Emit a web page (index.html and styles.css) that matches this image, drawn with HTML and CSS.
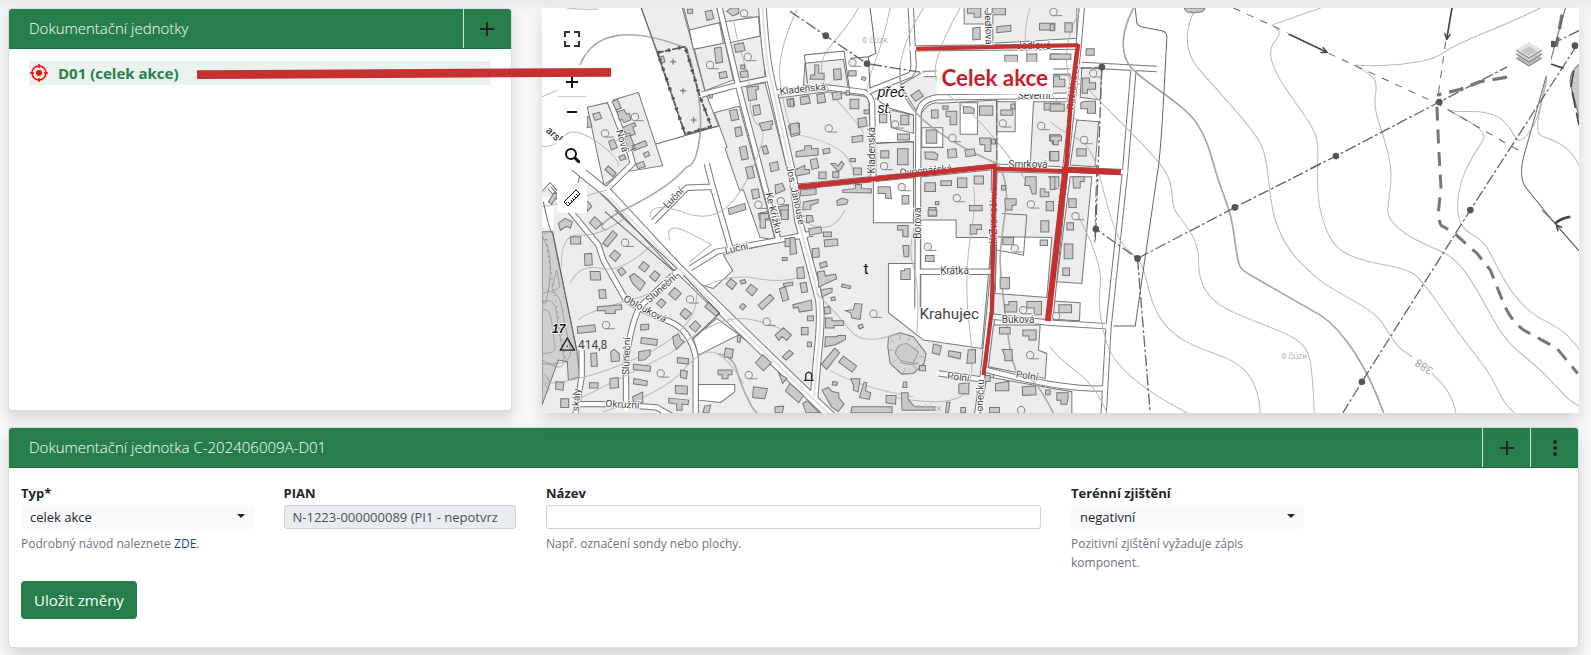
FILE: index.html
```html
<!DOCTYPE html>
<html lang="cs">
<head>
<meta charset="utf-8">
<meta name="viewport" content="width=device-width, initial-scale=1">
<title>Dokumentační jednotky</title>
<link rel="stylesheet" href="styles.css">
</head>
<body>
<main class="page">
  <div class="top">
    <section class="card units">
      <header class="card-header">
        <h2 class="card-title">Dokumentační jednotky</h2>
        <button class="header-btn" type="button" aria-label="Přidat jednotku">
          <svg class="icon-plus" viewBox="0 0 14 14"><path d="M7 0v14M0 7h14"/></svg>
        </button>
      </header>
      <div class="unit-list">
        <a class="unit" href="#d01">
          <svg class="icon-target" viewBox="0 0 18 18"><circle cx="9" cy="9" r="7"/><path d="M9 0v4M9 14v4M0 9h4M14 9h4"/><circle class="dot" cx="9" cy="9" r="3"/></svg>
          <span>D01 (celek akce)</span>
        </a>
      </div>
    </section>

    <section class="map" aria-label="Mapa">
      <svg class="map-art" viewBox="0 0 3111 1215" preserveAspectRatio="xMidYMid slice">
        <defs>
          <symbol id="tree" viewBox="-14 -14 44 28" overflow="visible"><circle r="11" fill="#ededed"/><path d="M2 11h24" fill="none"/></symbol>
          <marker id="arrow" viewBox="0 0 20 20" refX="18" refY="10" markerWidth="22" markerHeight="22" markerUnits="userSpaceOnUse" orient="auto"><path d="M2 2l16 8-16 8" fill="none" stroke="#444" stroke-width="4"/></marker>
          <g id="roads">
            <path class="road trunk" d="M110 480L240 585 440 800 800 1150 905 1250"/>
            <path class="road" d="M60 560L135 650 205 735 220 780 285 895Q310 920 420 965 480 990 497 1070V1250"/>
            <path class="road" d="M450 805L330 920Q305 960 288 1080V1225"/>
            <path class="road" d="M140 1212L240 1212 380 1222 430 1250M155 1050V1130L135 1250"/>
            <path class="road" d="M240 305L300 460 308 490 226 572"/>
            <path class="road" d="M568 20L625 260 715 600 745 720"/>
            <path class="road main" d="M697 20Q705 160 720 230L790 540 805 660 868 900Q875 960 862 1070L852 1190"/>
            <path class="road" d="M515 284L610 258 715 236"/>
            <path class="road" d="M740 278L890 262 1000 276Q1022 285 1026 310L1030 540M1020 272L1140 225Q1152 215 1150 190L1142 20"/>
            <path class="road" d="M1162 920L1165 340Q1170 300 1220 292L1620 287"/>
            <path class="road" d="M1145 145L1640 140M1380 20V140M1180 222L1620 214"/>
            <path class="road" d="M805 560L1400 500 1785 516"/>
            <path class="road" d="M1392 510L1388 830 1360 1110 1340 1250"/>
            <path class="road" d="M1655 20L1645 140 1605 510 1560 960"/>
            <path class="road" d="M1165 815H1385M1390 950L1560 968 1725 978"/>
            <path class="road" d="M1225 1120L1370 1140M1370 1110Q1600 1170 1720 1165"/>
            <path class="road" d="M1655 195L1880 207M1810 207L1785 510 1735 980 1720 1250"/>
            <path class="road" d="M370 665L470 563 548 560 530 490M548 560L600 740M480 805L560 755 850 700"/>
          </g>
        </defs>
        <rect width="3111" height="1215" fill="#fff"/>

        <g transform="translate(-36 -24)" fill="#ececec" stroke="#777" stroke-width="3">
          <path d="M333 20L456 20 525 275 566 378 465 403Z"/>
          <path d="M460 20L560 20 610 240 525 272ZM575 20H690L705 230 640 245 620 245Z"/>
          <path d="M553 338L628 318 710 620 735 720 690 712 640 570H628L585 445 591 441Z"/>
          <path d="M628 262L705 248 780 540 810 700 748 715Z"/>
          <path d="M172 322L232 308 310 490 222 555ZM250 300L325 277 398 497 290 515 305 480Z"/>
          <path d="M20 590L60 548 130 620 150 520 440 805 905 1260H20Z"/>
          <path d="M550 865L608 812 580 765 830 705 780 562 1400 500 1388 1250H910L500 850Z"/>
          <path d="M825 190L940 178 955 270 820 255ZM740 295L890 275 1015 290 1030 540 795 552Z"/>
          <path d="M1030 430L1150 425 1150 520 1030 530ZM1080 330L1150 345V400L1083 383Z"/>
          <path d="M1170 530L1173 340Q1200 300 1230 310L1400 300V500Z"/>
          <path d="M1180 215L1110 255 1160 335 1190 295 1620 285V225Z"/>
          <path d="M1400 305H1455V395H1400ZM1510 305H1620L1600 500H1500Z"/>
          <path d="M1302 20H1370V72H1302ZM1385 20H1640V115L1385 130Z"/>
          <path d="M1400 515L1600 520 1560 970 1390 955Z"/>
          <path d="M1390 975H1530L1525 1050 1550 1060 1545 1135 1375 1100ZM1370 1130L1625 1175V1250H1350Z"/>
          <path d="M1655 200L1715 205 1710 300 1650 292ZM1640 360L1705 365 1695 500 1620 495ZM1620 530L1685 530 1655 850 1580 845ZM1570 903L1650 908 1648 962 1570 958Z"/>
          <g fill="#fff">
            <path d="M478 90L568 68 580 130 490 148ZM585 65L685 50 690 108 600 128Z"/>
            <path d="M360 680L450 590 548 560 600 745 500 780 465 788Z" stroke="none"/>
            <path d="M490 1015L560 955 690 1050 625 1005 505 1065ZM505 1153H614V1175L572 1207 505 1200Z"/>
            <path d="M1030 536L1150 525V625L1150 668H1030Z"/>
            <path d="M1075 790H1155V925H1172V660H1278V712H1385L1355 1045 1180 1020 1075 938Z"/>
            <path d="M1290 308H1342V403H1290ZM1175 383H1238V442H1175ZM1400 710L1565 712 1550 892 1395 880Z"/>
            <path d="M1415 640L1490 645 1480 765 1400 750" fill="none"/>
            <path d="M36 590H75L70 690 36 680Z" stroke="none"/>
          </g>
          <path d="M36 695H68L140 1050 150 1130 115 1140 112 1085 85 1080 36 1215Z" fill="#cfcfcf"/>
          <g fill="none" stroke="#8a8a8a" stroke-width="2">
            <path d="M38 710Q70 760 58 850T38 900M38 880Q85 860 95 920T120 1040 38 1090M38 905Q75 890 80 940T100 1060 38 1080M38 930Q60 920 66 970T75 1040 38 1060M66 865L80 810 90 860 70 875ZM40 1120Q70 1140 50 1180M40 1150L60 1170"/>
            <path d="M50 718L64 830 52 880M44 700L110 1100" stroke-dasharray="3 14" stroke-width="4"/>
          </g>
          <path d="M1075 1010L1110 998 1150 1010 1188 1060 1182 1090 1150 1120 1115 1122 1080 1090 1073 1040Z" fill="#d6d6d6"/>
          <path d="M1095 1060Q1100 1030 1130 1030L1165 1055 1150 1090 1110 1080ZM1110 1085Q1140 1100 1165 1088" fill="#ccc" stroke="#999"/>
          <path d="M1080 1015L1094 1030M1110 1002V1020M1140 1008L1132 1024M1165 1035L1155 1046M1182 1070L1166 1070M1160 1110L1150 1095M1120 1118L1124 1104M1085 1088L1100 1078M1076 1050H1092" stroke="#999" stroke-width="2"/>
        </g>

        <g transform="translate(-36 -24)" fill="none">
          <use href="#roads" class="road-edge"/>
          <use href="#roads" class="road-fill"/>
          <path d="M240 592L440 800 800 1150 905 1250M697 20Q705 160 720 230L790 540 805 660 868 900Q875 960 862 1070L852 1190" stroke="#e4e4e4" stroke-width="7"/>
        </g>

        <g fill="none" stroke="#b9b9b9" stroke-width="3">
          <g transform="translate(-36 -24)">
            <path d="M150 195Q180 120 260 107T470 145Q520 300 510 400T470 500Q420 560 300 620T230 690" stroke="#aaa" stroke-width="5"/>
            <path d="M36 290L82 270M110 24Q150 30 205 27M36 438Q70 445 100 410T200 425 265 500M36 620L90 610 230 570M610 60Q620 120 640 180T660 300 690 380 650 540 470 640 360 650M800 30Q740 160 750 240T780 380M95 800Q90 700 150 705T290 650M120 850Q150 790 210 805T360 740M145 960Q160 940 300 900T420 820M36 1150Q150 1150 330 1070T500 870M420 720Q400 660 480 700T540 735L480 785M520 860Q600 820 680 835T810 830M150 1195Q300 1120 420 1060 520 980 590 960T780 1000M640 1150Q600 1080 560 1060T460 1110 220 1235"/>
            <path d="M565 1060Q610 1070 620 1110T660 1210 740 1240" stroke="#aaa" stroke-width="5"/>
            <path d="M985 24Q960 70 900 140T920 300 1000 400M1080 24Q1060 120 1040 170T1010 270M1290 24Q1240 110 1220 180T1260 290 1380 400 1500 560M1180 24Q1120 120 1110 200T1150 320M780 400Q900 420 940 460T970 560M860 880Q920 940 960 990T1100 1000M1160 660Q1130 740 1150 800T1160 1000M1330 560Q1340 600 1320 720T1320 1000 1290 1190 1080 1190M900 1110Q980 1160 1150 1190M1500 20Q1470 120 1500 190T1640 360M810 655Q900 720 945 630"/>
            <path d="M1110 200Q1100 290 1180 360T1400 490Q1440 540 1425 640T1410 780 1430 980 1480 1130 1570 1240" stroke="#aaa" stroke-width="5"/>
          </g>
          <g transform="translate(1524 -24)">
            <path d="M250 24C215 90 205 160 245 205S400 310 440 370 485 490 515 570 545 660 555 730 565 805 600 825L810 945C880 990 950 1100 1000 1238" stroke="#a5a5a5" stroke-width="5"/>
            <path d="M435 30C405 80 400 150 440 200S610 380 635 440 650 560 672 650C700 740 740 780 780 815 840 880 960 910 1000 975S1040 1040 1085 1070M1145 1120C1190 1160 1210 1200 1217 1238"/>
            <path d="M850 10L665 75C700 95 685 110 670 130S655 180 690 240 790 370 800 420 790 560 815 650 870 770 990 792 1100 830 1130 865 1200 970 1280 1070 1330 1180 1392 1238"/>
            <path d="M75 225C150 310 250 400 320 480S350 600 380 640 445 720 445 780 460 880 510 915 700 990 740 1020 785 1070 792 1238"/>
            <path d="M0 365C60 420 110 400 140 500S170 630 200 700 260 750 280 810 300 960 400 1020 620 1060 630 1238M85 650Q160 790 150 860T170 1030 410 1238M0 1040Q20 1070 80 1115T170 1238M90 30Q40 120 50 200T90 250"/>
          </g>
          <g transform="translate(2304 -24)">
            <path d="M690 24C560 90 450 120 400 158S200 200 130 195C190 230 205 230 195 290S240 430 242 520 215 630 250 670 340 730 400 758 500 870 550 960 640 1060 700 1120 770 1200 806 1218"/>
            <path d="M710 230C690 300 690 360 650 405S620 390 570 355 450 345 410 328C470 360 530 390 520 415S440 520 442 620 500 680 540 760 620 920 700 960 780 1020 806 1045M710 240C690 330 670 390 690 405S770 420 806 495"/>
          </g>
        </g>

        <g fill="#c9c9c9" stroke="#777" stroke-width="3">
          <path transform="translate(-36 -24)" d="M472 28h16v12h-16zM525 35l20-5 6 26-20 5zM590 34l12-10h24v16l-18 8zM612 134l28-6 5 24-28 5zM553 145l20-4 5 45-20 4zM566 218l22-4 4 18-22 4zM632 195h12v12h-12zM630 215l22-3 3 18-22 3zM650 262l35-4v10l-8 2 3 28-24 4zM668 318l20-4 4 28-20 5zM598 332l22-4 6 30-22 4zM614 384l18-4 5 26-19 4zM688 370l28-6 10-2 2 12-6 1 2 12-28 5zM628 442l20-4 7 38-20 4zM646 502l20-4 8 34-20 4zM695 440l14-3 7 22-14 4zM718 490l24-5 5 24-24 6zM664 570l20-4 5 26-20 5zM594 626l50-16 4 18-50 16zM188 342l20-5 7 18-20 6zM172 350h6l8 30-14 3zM236 424l16-6 10 24-18 8zM266 470l16-6 6 12-16 6zM225 508l10-10 24 22-10 10zM246 304l16-6 12 26-16 6zM262 335l20-6 8 14 8-3 4 20-20 8-6-10-8 3zM278 382l36-14 4 10-10 4 8 20-12 5-6-8-10 4zM282 412l18-7 16 40-20 8zM306 438l40-16 6 14-40 16zM340 460l14-6 5 12-14 6zM318 492l22-8 6 16-22 6zM388 172l12-4 5 18-12 4zM537 284h10v10h-10zM770 298l20-3 4 22-20 3zM775 378l25-8h8v34l-24 6zM735 555l22-5 8 20-28 12zM55 605l18-28 10 8-18 28zM745 620l30-4v40h-20zM685 640l30-6 5 26h-32zM165 605l10 0 10 14-12 14z"/>
          <path transform="translate(-36 606)" d="M85 40l20-15 22 10-6 20-12-6-18 12zM178 38l16-18 22 20-18 18zM122 80h30v22h-30zM218 100l30-38 14 12-30 36zM238 138l16-18 18 14-16 20zM163 132l22-2 2 34-22 2zM180 184h30l2 26h-30zM262 180l14-8 12 14-14 12zM298 200l14-10 18 14 16 14-16 24-22-22zM326 172l14-18 18 14-14 18zM358 200l16-18 16 12-14 20zM206 240l20-2 3 26-20 1zM202 290l72-6 2 14-20 2v10h-30v-8h-24zM142 350l52-6 3 20-54 6zM416 252l18-20 20 18-18 20zM380 280l14-14 14 12-14 16zM450 312l14-18 20 16-16 18zM524 290l12-14 32 32-10 10zM478 350l18-18 16 16-16 18zM332 344l24-2v16l-24 2zM334 382l48 6-2 18-48-6zM428 380l18-8 6 16 10 6-22 24-8-14zM326 425l34-6v16l-16 14-18 2zM310 462l52 6-2 16-50-6zM442 442l34 4-2 16-32-4zM182 430l18-2 2 40-18 1zM242 425l10-8 16 14v22l-24 2zM452 480l20 4-3 22-18-4zM312 505l40 8-2 14-40-6zM178 518h26v16h-26zM240 505l24-3 2 30-26 3zM436 526l36 2v24l-36-2zM416 564l60 6-2 14-18-2v18h-16v-18l-24-4zM308 560l30-14v30h-28zM78 514l24 4-3 22-22-3zM92 566h24v26H92zM586 414l24 4-4 26-24-4zM564 480h42v14h-12v12h-18v-12h-12zM676 458l22-24 26 24-24 24zM670 530l42 6-8 30-36-4zM588 222l14-16 18 14-14 18zM648 240l14-18 20 16-16 20zM630 212l14-4 4 10-14 4zM684 285l36-32 12 12-36 34zM628 290l10-10 10 8-10 12zM748 236l18-6 10 38-18 6zM760 220l28-4v10l-26 4zM735 375l25-22 24 22-14 16-14-12-10 12zM756 440l22-20 12 10-22 20zM746 490l24 14-12 16zM690 10h26v16h-10v28h-16zM752 0h22v28h-20zM765 85h30v44l-14-4v-16h-16zM757 142h14v9h-14zM622 376l10-1-2 22-8-2zM524 588l18-4-6 24h-18zM735 590l26-2-4 20h-22z"/>
          <path transform="translate(744 -24)" d="M62 225h12v-30h12v25h16v18H60zM130 208l22-2 2 32-22 2zM176 212h22v16h-22zM216 230l12 4-4 8-10-4zM30 292l26-5 5 22-28 5zM80 284l22-4 5 26-24 4zM126 278l26-4 3 22-26 4zM0 298h10v22H0zM168 272h10v14h-10zM180 298h26v28h-26zM222 330h15v11h-15zM203 356l24-4 4 26-26 4zM186 410l32-4v18l-32 4zM18 455l26-6v-12h20v10l20-2v20l-66 6zM98 448l20-4 2 14-20 4zM0 372l24-4 6 30-28 6zM60 480l20-5 6 28-20 5zM14 510l30-14v12h14v12l-40 8zM122 490h14l8 8 10-14 8 8-10 16-8 6zM86 516h22v20H86zM128 515h18v18h-18zM190 504h24v20h-24zM180 475h16v10h-16zM158 570l38-5v-12h18v12l30 2v12l-86-2zM30 570l48-5v18l-46 5zM40 606l44-8v10l-22 8v12l-24 2zM140 602l16-8 18 6-4 12-28 4zM264 560h36l4 36-18-2v-14h-22zM336 586h20v26h-20zM268 342h22v26h-22zM332 346h24v28h-24zM322 402h36v18h-36zM272 452h24v22h-24zM322 446h32v48h-32zM362 286l24-16 14 18-24 16zM424 330h20v24h-20zM458 318h16v10h-16zM468 334h32v40h-20v-24h-12zM408 390h32v40h-32zM404 456h28l12 8-4 16-34-4zM472 448l26-2 2 26-26 2zM524 450l28-4 4 20-28 4zM520 320h20l12 6v14h-32zM568 318h40v28h-40zM568 414h34v40h-18v-20h-14zM604 418h12v14h-12zM632 330h36v16h-36zM662 312h12v14h-12zM762 310h48v20h-48zM778 404h32v14h-8v14h-16v-10h-8zM778 454h26v28h-26zM404 548h32v26h-32zM452 542h32v14h-32zM502 534h28v28h-28zM552 528h28v24h-28zM538 616h38v16h-38zM416 622h22v26h-22zM436 604h10v10h-10zM706 530h32v52h-12l-8-26h-14zM644 596h34v18l-12 2v14h-20zM750 566h14v10h12v14h-26zM768 604h22v28h-22zM776 530h30v36h-16v-16zM634 556h12v14h-12zM548 84l22-2v36l-22 2zM620 80l42-4v18l-42 4zM606 24h40v20h-40zM532 24h40v28h-20v-12h-20zM748 70h46v20h-46zM644 166h38v20h-38zM710 162h30v24h-30zM780 162h30v16h-30z"/>
          <path transform="translate(744 606)" d="M48 16h18l4 18-20 4zM56 56l36-6 4 18-38 8zM100 66h24v14h-24zM102 90l40-4 2 20-40 4zM0 82h14l6 48-20 4zM66 116l20-2 2 26-20 3zM88 160l20-6 4 14-20 6zM20 174l20-4 4 34-22 2zM82 186l20-4 4 16 30-6 4 14-32 14-22 12zM30 220l18-3 5 28-18 3zM92 240l34-6v12l-30 14zM8 284l56-14 2 30-38 6-4-14-14 2zM122 262l12-2 2 10-12 2zM102 292l16-3 4 20-18 3zM52 318h18v14H52zM106 324h20v8h34v14h-28v8h-26zM34 352h20v22H34zM106 380h36v-4h24v12l-30 16-32 6zM52 396h12v14H52zM94 462l40-48 14 14-38 50zM146 456l14-18 40 30-14 18zM166 302l24-4 4-18 22 2-6 46-24-4-4-16zM156 222l26 6-2 8-26-6zM204 346l12-4 4 10-12 4zM322 46h32v34h-16V60h-16zM338 106h18v34h-14zM332 182h12v-6h16v32h-28zM406 136h26v18h-26zM540 44h34v14h-14v14h-20zM414 0h26v18h-26zM638 82h32v22h-32zM752 32h24v34h-24zM750 90h22v16h-22zM630 202h28v34h-28zM644 284h12v-10h24v32h-36zM710 274h44v40h-22v-20h-22zM698 360h40v30h-22v-12h-18zM628 352h32v20h-32zM636 418h30v34h-22v-14zM430 402l24 6-6 26-22-6zM476 422l36 6-2 18-36-8zM534 420l22-2v40l-26 2zM388 466h18v16h-18zM506 522l30-4v34l-30-2zM616 520l40-6v28h-40zM696 530l40-2 2 26-40 2zM584 496h16v18h-16zM766 540h14v14h-14zM182 506h28l-6 40-14-6v-16zM222 516l8 2-4 24 16 6-4 20-30-6zM288 556h30l-2 26-28-4zM340 516h10v16h-12zM334 548h20v20l20 22h60v10h-98zM96 540l18-8 12 12 20 4v14l16 20-18 22-20-14zM128 514l14 2-2 10-14-2zM0 520l40 36-14 22-40-36zM38 580l14-8 36 36H48zM186 590h120v18H182zM470 576h10l-6 32h-8zM598 592h30v16h-30zM512 592h14v16h-14z"/>
          <path transform="translate(1524 -24)" d="M44 68h22v28H44zM0 72h12v20H0zM108 146h24v20h-24zM0 162h62v16H0zM10 228h18v10h16v22H10zM96 234h22v14h18v20h-24v12H96zM92 308l12-4h32v36h-24v-14H92zM0 312h42v22H0zM0 408h34v14H24v12H10v-12H0zM0 454h26v28H0zM80 446h28v22H80zM68 530h34v14H90v20H70zM56 596h22v26H56zM0 530h14v38H0zM50 668h20v22H50zM42 732h26v44H42zM38 804h20v22H38zM26 914h38v24H26zM20 1178h34v14l-4 20H32v-12H20zM402 24q4 16 20 12 8 6 18 0 18 4 24-12z"/>
          <path transform="translate(2304 -24)" d="M810 190Q770 220 782 260T810 370Z"/>
        </g>

        <g stroke="#888" stroke-width="3">
          <g transform="translate(-36 -24)">
            <use href="#tree" x="526" y="181" width="44" height="28"/><use href="#tree" x="639" y="157" width="44" height="28"/><use href="#tree" x="301" y="337" width="44" height="28"/><use href="#tree" x="211" y="386" width="44" height="28"/><use href="#tree" x="671" y="600" width="44" height="28"/><use href="#tree" x="738" y="589" width="44" height="28"/><use href="#tree" x="628" y="26" width="44" height="28"/>
            <use href="#tree" x="271" y="714" width="44" height="28"/><use href="#tree" x="466" y="884" width="44" height="28"/><use href="#tree" x="214" y="961" width="44" height="28"/><use href="#tree" x="378" y="1106" width="44" height="28"/><use href="#tree" x="696" y="951" width="44" height="28"/><use href="#tree" x="642" y="1111" width="44" height="28"/>
          </g>
          <g transform="translate(744 -24)">
            <use href="#tree" x="173" y="174" width="44" height="28"/><use href="#tree" x="102" y="371" width="44" height="28"/><use href="#tree" x="301" y="359" width="44" height="28"/><use href="#tree" x="473" y="400" width="44" height="28"/><use href="#tree" x="624" y="356" width="44" height="28"/><use href="#tree" x="739" y="364" width="44" height="28"/><use href="#tree" x="321" y="547" width="44" height="28"/><use href="#tree" x="486" y="580" width="44" height="28"/><use href="#tree" x="708" y="599" width="44" height="28"/><use href="#tree" x="268" y="484" width="44" height="28"/><use href="#tree" x="776" y="22" width="44" height="28"/>
            <use href="#tree" x="399" y="726" width="44" height="28"/><use href="#tree" x="236" y="927" width="44" height="28"/><use href="#tree" x="685" y="916" width="44" height="28"/><use href="#tree" x="706" y="1051" width="44" height="28"/><use href="#tree" x="660" y="731" width="44" height="28"/><use href="#tree" x="679" y="1216" width="44" height="28"/>
            <use href="#tree" x="868" y="406" width="44" height="28"/><use href="#tree" x="842" y="634" width="44" height="28"/><use href="#tree" x="895" y="206" width="44" height="28"/><use href="#tree" x="784" y="934" width="44" height="28"/>
          </g>
        </g>

        <g fill="none" stroke="#666" stroke-width="3">
          <g transform="translate(-36 -24)">
            <path d="M383 158L465 140 510 290 544 380 465 402Z" stroke="#555" stroke-width="5" stroke-dasharray="18 4"/>
            <path d="M383 158L465 140 510 290 544 380 465 402Z" stroke="#555" stroke-width="10" stroke-dasharray="7 24"/>
            <path d="M420 185h18M429 176v18M450 272h18M459 263v18M482 360h18M491 351v18M333 24L383 158M378 432L565 378"/>
            <path d="M255 630L440 805 430 812 225 635M460 825L568 940 490 1015M100 600L62 560M40 605Q60 700 68 700L140 1050"/>
            <path d="M823 165L942 153 958 268M823 165L832 250M1020 24L1037 160 1015 170 960 175M1015 172L1020 265M1030 430L1150 425"/>
            <path d="M1035 295L1080 325 1150 345"/>
            <path d="M1400 300V480" stroke-dasharray="30 8"/>
            <path d="M1700 495Q1690 820 1697 690" stroke-dasharray="36 8 8 8"/>
          </g>
          <g transform="translate(1524 -24)">
            <path d="M255 24L260 70Q265 80 280 82L335 92Q350 95 350 110L340 300Q330 480 320 530L255 978H190"/>
            <path d="M810 492L554 622 262 775 137 687 155 201M262 775L300 1238" stroke-width="4" stroke-dasharray="34 8 8 8"/>
            <path d="M90 205L155 201" stroke-dasharray="34 8"/>
            <path d="M550 24L712 98" stroke-dasharray="22 22"/>
            <path d="M715 102L830 157" stroke="#444" stroke-width="5" marker-end="url(#arrow)"/>
          </g>
          <g transform="translate(744 -24)"><path d="M0 34L107 107 231 191 400 218" stroke-dasharray="34 8 8 8" stroke-width="4"/></g>
          <g transform="translate(2304 -24)">
            <path d="M806 92L727 130 387 306 77 468 0 506M800 135L480 630 155 1145 98 1238" stroke-width="4" stroke-dasharray="34 8 8 8"/>
            <path d="M55 160L380 310 640 460M406 125L383 290" stroke-dasharray="22 22"/>
            <path d="M425 24L409 118" stroke="#444" stroke-width="5" marker-end="url(#arrow)"/>
            <path d="M755 44L738 140M590 231L510 245 450 268 380 285" stroke-width="10" stroke-dasharray="44 24" stroke="#777"/>
            <path d="M380 320L385 440 392 560 385 630Q385 680 400 680L430 698 500 760 540 810 580 910Q600 960 640 990L740 1045 802 1120" stroke-width="9" stroke-dasharray="42 26" stroke="#777"/>
            <path d="M765 24L640 470Q625 530 645 560L725 660 806 752"/>
            <path d="M695 630L738 672M806 752L738 675" marker-end="url(#arrow)"/>
            <path d="M735 670Q750 655 780 650" stroke="#444" stroke-width="7"/>
            <path d="M722 192L760 205M790 212L782 260 806 375" stroke="#444" stroke-width="5" stroke-dasharray="50 14"/>
          </g>
        </g>
        <g fill="#555">
          <circle cx="851" cy="83" r="10"/><circle cx="975" cy="167" r="10"/><circle cx="1679" cy="177" r="10"/><circle cx="1661" cy="663" r="10"/><circle cx="1786" cy="751" r="10"/><circle cx="2078" cy="598" r="10"/><circle cx="2381" cy="444" r="10"/><circle cx="2691" cy="282" r="10"/><circle cx="3098" cy="113" r="10"/><circle cx="3031" cy="108" r="10"/><circle cx="2784" cy="606" r="10"/><circle cx="2459" cy="1121" r="10"/>
        </g>

        <g class="map-labels">
          <g transform="translate(-36 -24)">
            <text transform="translate(750 284) rotate(-6)">Kladenská</text>
            <text transform="translate(46 394) rotate(42)" class="dark">arsk.</text>
            <text transform="translate(258 392) rotate(74)">Nová</text>
            <text transform="translate(412 626) rotate(-45)">Luční</text>
            <text transform="translate(768 500) rotate(78)">Jos. Janouše</text>
            <text transform="translate(706 580) rotate(76)">Ke Křížku</text>
            <text transform="translate(586 762) rotate(-12)">Luční</text>
            <text transform="translate(358 910) rotate(-42)">Sluneční</text>
            <text transform="translate(278 902) rotate(28)">Oblouková</text>
            <text transform="translate(297 1125) rotate(-88)">Sluneční</text>
            <text transform="translate(146 1234) rotate(-86)">skály</text>
            <text transform="translate(226 1220) rotate(3)">Okružní</text>
            <text x="66" y="1000" class="spot">17</text>
            <text x="144" y="1046" class="height">414,8</text>
          </g>
          <g transform="translate(744 -24)">
            <text x="215" y="130" class="copy">© ČÚZK</text>
            <text x="262" y="290" class="place">přeč.</text>
            <text x="262" y="338" class="place">st.</text>
            <text transform="translate(256 520) rotate(-90)">Kladenská</text>
            <text transform="translate(583 30) rotate(88)">Jedlová</text>
            <text x="678" y="148">Jedlová</text>
            <text x="683" y="298">Severní</text>
            <text x="655" y="504">Smrková</text>
            <text transform="translate(330 528) rotate(-5)">Ovocnářská</text>
            <text transform="translate(392 716) rotate(-90)">Borová</text>
            <text transform="translate(620 730) rotate(-90)">K Zvonečku</text>
            <text transform="translate(850 330) rotate(-84)">Růžičkova</text>
            <text transform="translate(824 610) rotate(-84)">Habrová</text>
            <text x="450" y="822">Krátká</text>
            <text x="388" y="958" class="town">Krahujec</text>
            <text x="635" y="968">Buková</text>
            <text transform="translate(470 1136) rotate(8)">Polní</text>
            <text transform="translate(676 1132) rotate(8)">Polní</text>
            <text transform="translate(578 1234) rotate(-88)">onečku</text>
            <text x="376" y="1232" class="copy">© ČÚZK</text>
            <text x="220" y="822" class="cross">t</text>
          </g>
          <g transform="translate(1524 606)"><text x="692" y="446" class="copy">© ČÚZK</text></g>
          <g transform="translate(2304 606)"><text transform="translate(371 476) rotate(214)" class="contour">388</text></g>
        </g>
        <path d="M76 990l-21 36h42zM76 1013v4M785 1117h30M791 1117v-18q9-14 18 0v18" fill="none" stroke="#222" stroke-width="4"/>

        <g fill="none" stroke="#c53030">
          <path d="M1122 122L1608 112" stroke-width="12"/>
          <path d="M1608 108L1586 276 1571 488" stroke-width="13"/>
          <path d="M1570 484L1517 939" stroke-width="18"/>
          <path d="M768 537L1364 474" stroke-width="15"/>
          <path d="M1360 482L1565 489" stroke-width="12"/>
          <path d="M1560 484L1736 493" stroke-width="17"/>
          <path d="M1358 474L1349 906 1324 1101" stroke-width="12"/>
        </g>
        <rect x="1184" y="161" width="348" height="97" fill="#fff"/>
        <text class="callout" x="1358" y="233" text-anchor="middle">Celek akce</text>
      </svg>

      <div class="controls">
        <button class="ctl" type="button" aria-label="Celá obrazovka"><svg viewBox="0 0 16 16" class="i16"><path d="M1 6V1h5M10 1h5v5M15 10v5h-5M6 15H1v-5" fill="none" stroke="#333" stroke-width="2"/></svg></button>
        <div class="zoom">
          <button class="ctl" type="button" aria-label="Přiblížit"><svg viewBox="0 0 12 12" class="i12"><path d="M6 0v12M0 6h12" stroke="#111" stroke-width="2"/></svg></button>
          <button class="ctl" type="button" aria-label="Oddálit"><svg viewBox="0 0 12 12" class="i12"><path d="M1 6h10" stroke="#111" stroke-width="2"/></svg></button>
        </div>
        <button class="ctl" type="button" aria-label="Hledat"><svg viewBox="0 0 16 16" class="i16"><circle cx="7" cy="7" r="5" fill="none" stroke="#111" stroke-width="2"/><path d="M11 11l4 4" stroke="#111" stroke-width="3" stroke-linecap="round"/></svg></button>
        <button class="ctl" type="button" aria-label="Měřit"><svg viewBox="0 0 18 18" class="i18"><path d="M1 13L13 1l4 4L5 17zM4 14l-1-1M7 15l-2-2M9 13l-1-2M11 11l-2-2M13 9l-2-2M15 7l-2-2" fill="none" stroke="#111"/></svg></button>
      </div>
      <button class="layers" type="button" aria-label="Vrstvy"><svg viewBox="0 0 26 26"><path d="M13 9l13 8-13 8-13-8z" fill="#bbb"/><path d="M0 17l13 8 13-8" fill="none" stroke="#777"/><path d="M13 5l13 8-13 8-13-8z" fill="#ccc"/><path d="M0 13l13 8 13-8" fill="none" stroke="#777"/><path d="M13 1l13 8-13 8L0 9z" fill="#e4e4e4"/><path d="M13 5l8 5-8 5-8-5z" fill="#c6c6c6"/><path d="M0 9l13 8 13-8" fill="none" stroke="#777"/></svg></button>
    </section>

    <svg class="pointer-line" viewBox="0 0 100 10" preserveAspectRatio="none" aria-hidden="true"><path d="M0 2L100 0V8L0 10Z"/></svg>
  </div>

  <section class="card">
    <header class="card-header">
      <h2 class="card-title">Dokumentační jednotka C-202406009A-D01</h2>
      <button class="header-btn" type="button" aria-label="Přidat">
        <svg class="icon-plus" viewBox="0 0 14 14"><path d="M7 0v14M0 7h14"/></svg>
      </button>
      <button class="header-btn" type="button" aria-label="Další možnosti">
        <svg class="icon-more" viewBox="0 0 4 16"><circle cx="2" cy="2" r="2"/><circle cx="2" cy="8" r="2"/><circle cx="2" cy="14" r="2"/></svg>
      </button>
    </header>
    <form class="form">
      <div class="fields">
        <div class="field">
          <label for="typ">Typ*</label>
          <div class="select-wrap"><select id="typ"><option>celek akce</option></select></div>
          <p class="help">Podrobný návod naleznete <a href="#navod">ZDE</a>.</p>
        </div>
        <div class="field">
          <label for="pian">PIAN</label>
          <input id="pian" type="text" value="N-1223-000000089 (PI1 - nepotvrz" disabled>
        </div>
        <div class="field wide">
          <label for="nazev">Název</label>
          <input id="nazev" type="text">
          <p class="help">Např. označení sondy nebo plochy.</p>
        </div>
        <div class="field">
          <label for="zjisteni">Terénní zjištění</label>
          <div class="select-wrap"><select id="zjisteni"><option>negativní</option></select></div>
          <p class="help">Pozitivní zjištění vyžaduje zápis komponent.</p>
        </div>
      </div>
      <button class="save" type="button">Uložit změny</button>
    </form>
  </section>
</main>
</body>
</html>
```
FILE: styles.css
```css
* { box-sizing: border-box; }

body {
  margin: 0;
  background: #f8f9fa;
  color: #212529;
  font-family: "Open Sans", "Noto Sans", sans-serif;
  font-size: 14px;
}

.page {
  display: flex;
  flex-direction: column;
  gap: 14px;
  min-height: 100vh;
  padding: 8px 12px 7px 8px;
  background: linear-gradient(#e9eaec, #f4f5f6 12px, #f8f9fa 24px);
}

.top {
  position: relative;
  display: grid;
  grid-template-columns: repeat(12, minmax(0, 1fr));
  column-gap: 30px;
}

.card {
  display: flex;
  flex-direction: column;
  background: #fff;
  border: 1px solid #d9dbdd;
  border-radius: 4px;
  box-shadow: 0 8px 16px rgba(0, 0, 0, .15);
}

.units { grid-column: span 4; margin-bottom: 2px; }

.card-header {
  display: flex;
  height: 40px;
  background: #267f4b;
  border-bottom: 1px solid #1e6b3e;
  border-radius: 3px 3px 0 0;
}

.card-title {
  flex: 1;
  margin: 0;
  padding-left: 20px;
  color: #fff;
  font-size: 15px;
  font-weight: 300;
  line-height: 38px;
}

.header-btn {
  display: flex;
  align-items: center;
  justify-content: center;
  width: 48px;
  padding: 0;
  border: 0;
  border-left: 1px solid #d3e5db;
  background: none;
}

.icon-plus { width: 14px; height: 14px; fill: none; stroke: #212529; stroke-width: 2; }
.icon-more { width: 4px; height: 16px; fill: #212529; }

.unit-list { padding: 12px 20px; }

.unit {
  display: flex;
  align-items: center;
  gap: 10px;
  height: 24px;
  padding-left: 1px;
  background: #e9f2ed;
  color: #267f4b;
  font-size: 15px;
  font-weight: 700;
  text-decoration: none;
}

.icon-target { width: 18px; height: 18px; fill: none; stroke: #f00; stroke-width: 1.5; }
.icon-target .dot { fill: #f00; stroke: none; }

.map {
  position: relative;
  grid-column: span 8;
  box-shadow: 0 8px 16px rgba(0, 0, 0, .15);
}

.map-art { display: block; width: 100%; }

.road { stroke-width: calc(13px + var(--edge)); stroke-linejoin: round; }
.road.main { stroke-width: calc(20px + var(--edge)); }
.road.trunk { stroke-width: calc(24px + var(--edge)); }
.road-edge { --edge: 6px; stroke: #777; }
.road-fill { --edge: 0px; stroke: #fff; stroke-linecap: square; }

.map-labels {
  fill: #444;
  stroke: #fff;
  stroke-width: 5;
  paint-order: stroke;
  font-family: Roboto, "Liberation Sans", sans-serif;
  font-size: 30px;
}
.map-labels .spot { fill: #111; font: italic bold 36px "Liberation Sans", sans-serif; }
.map-labels .height { font-size: 36px; stroke: none; }
.map-labels .copy { fill: #aaa; stroke: none; font-size: 22px; }
.map-labels .place { fill: #111; font: italic 42px "Liberation Sans", sans-serif; }
.map-labels .town { font-size: 46px; }
.map-labels .cross { fill: #111; font-size: 46px; stroke: none; }
.map-labels .dark { fill: #111; font-size: 32px; }
.map-labels .contour { fill: #aaa; font-size: 34px; stroke: none; }

.callout {
  fill: #c4202e;
  font-family: Lato, sans-serif;
  font-size: 67px;
  font-weight: 700;
}

.controls {
  position: absolute;
  top: 16px;
  left: 15px;
  display: flex;
  flex-direction: column;
  gap: 13px;
}

.ctl {
  display: flex;
  align-items: center;
  justify-content: center;
  width: 30px;
  height: 30px;
  padding: 0;
  border: 0;
  border-radius: 2px;
  background: #fff;
}
.zoom .ctl:first-child { border-bottom: 1px solid #ccc; }
.i12 { width: 12px; height: 12px; }
.i16 { width: 16px; height: 16px; }
.i18 { width: 18px; height: 18px; }

.layers {
  position: absolute;
  top: 24px;
  right: 28px;
  display: flex;
  align-items: center;
  justify-content: center;
  width: 44px;
  height: 44px;
  padding: 0;
  border: 0;
  border-radius: 4px;
  background: #fff;
}
.layers svg { width: 26px; height: 26px; }

.pointer-line {
  position: absolute;
  top: 60px;
  left: 12%;
  width: 26.4%;
  height: 11px;
  fill: #c53030;
}

.form { padding: 16px 12px 28px; }

.fields {
  display: grid;
  grid-template-columns: repeat(12, minmax(0, 1fr));
  column-gap: 30px;
}
.field { grid-column: span 2; }
.wide { grid-column: span 4; }

label {
  display: block;
  margin-bottom: 3px;
  font-size: 13px;
  font-weight: 700;
  line-height: 18px;
}

input, select {
  display: block;
  width: 100%;
  height: 24px;
  padding: 0 8px;
  border: 1px solid #ced4da;
  border-radius: 3px;
  background: #fff;
  color: #212529;
  font: 13px "Open Sans", "Noto Sans", sans-serif;
}
input:disabled { background: #e9ecef; color: #495057; }

.select-wrap { position: relative; }
.select-wrap::after {
  content: "";
  position: absolute;
  top: 9px;
  right: 9px;
  border: 4px solid transparent;
  border-top-color: #212529;
  border-bottom: 0;
}
select { appearance: none; border-color: #f8f9fa; background: #f8f9fa; }

.help {
  margin: 5px 0 0;
  color: #6c757d;
  font-size: 12px;
  line-height: 19px;
}
.help a { color: #1a3f9c; text-decoration: none; }

.save {
  display: block;
  height: 38px;
  margin-top: 9px;
  padding: 0 13px;
  border: 0;
  border-radius: 4px;
  background: #267f4b;
  color: #fff;
  font: 15px "Open Sans", "Noto Sans", sans-serif;
}
```
